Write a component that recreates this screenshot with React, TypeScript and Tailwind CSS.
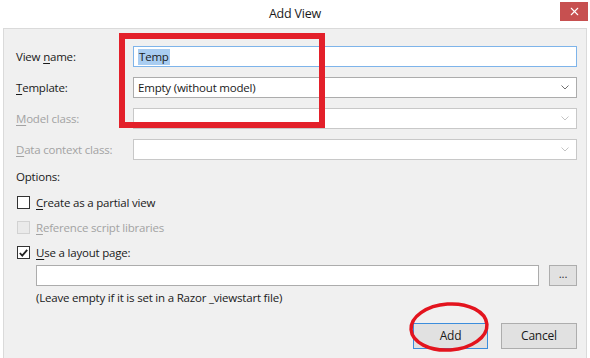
import { X } from "lucide-react";

const Chevron = ({ disabled }: { disabled?: boolean }) => (
  <svg width="8" height="5" viewBox="0 0 8 5" className="mr-[7px]">
    <path
      d="M0.5 0.5 L4 4 L7.5 0.5"
      fill="none"
      stroke={disabled ? "#c4c4c4" : "#707070"}
      strokeWidth="1"
    />
  </svg>
);

const Label = ({
  lead,
  rest,
  pre = "",
  disabled,
}: {
  lead: string;
  rest: string;
  pre?: string;
  disabled?: boolean;
}) => (
  <span className={disabled ? "text-[#a3a3a3]" : "text-[#1a1a1a]"}>
    {pre}
    <span className="underline underline-offset-2">{lead}</span>
    {rest}
  </span>
);

const CheckRow = ({
  lead,
  rest,
  checked,
  disabled,
}: {
  lead: string;
  rest: string;
  checked?: boolean;
  disabled?: boolean;
}) => (
  <div className="flex h-[25px] items-center pl-[13px]">
    <div
      className={
        "flex h-[13px] w-[13px] items-center justify-center border " +
        (disabled ? "border-[#d2d2d2] bg-[#eaeaea]" : "border-[#333] bg-white")
      }
    >
      {checked && (
        <svg width="9" height="8" viewBox="0 0 9 8">
          <path
            d="M0.8 4 L3.3 6.6 L8.2 0.8"
            fill="none"
            stroke="#222"
            strokeWidth="1.8"
          />
        </svg>
      )}
    </div>
    <span className="ml-[6px]">
      <Label lead={lead} rest={rest} disabled={disabled} />
    </span>
  </div>
);

const App = () => {
  return (
    <div
      className="relative flex h-[358px] w-[590px] flex-col overflow-hidden bg-white text-[11.5px] leading-[16px] tracking-[-0.2px]"
      style={{ fontFamily: '"Open Sans", "Noto Sans", sans-serif' }}
    >
      {/* title bar */}
      <div className="relative flex h-[28px] items-center justify-center">
        <span className="text-[12.5px] text-[#1a1a1a]">Add View</span>
        <div className="absolute right-[2px] top-[2px] flex h-[19px] w-[28px] items-center justify-center bg-[#c75050]">
          <X size={13} color="white" strokeWidth={2} />
        </div>
      </div>

      {/* dialog body */}
      <div className="mx-[3px] flex flex-1 flex-col border border-b-0 border-[#dadada] bg-[#f0f0f0] pr-[9px] pt-[17px]">
        <div className="grid grid-cols-[117px_1fr] gap-y-[10px] pl-[12px]">
          <div className="flex h-[21px] items-center">
            <Label pre="View " lead="n" rest="ame:" />
          </div>
          <div className="flex h-[21px] items-center border border-[#7eb4ea] bg-white pl-[4px]">
            <span className="bg-[#a9cdf1] px-[1px] text-[#1a1a1a]">Temp</span>
          </div>

          <div className="flex h-[21px] items-center">
            <Label lead="T" rest="emplate:" />
          </div>
          <div className="flex h-[21px] items-center justify-between border border-[#acacac] bg-white pl-[4px]">
            <span className="text-[#1a1a1a]">Empty (without model)</span>
            <Chevron />
          </div>

          <div className="flex h-[21px] items-center">
            <Label lead="M" rest="odel class:" disabled />
          </div>
          <div className="flex h-[21px] items-center justify-end border border-[#c8c8c8] bg-white">
            <Chevron disabled />
          </div>

          <div className="flex h-[21px] items-center">
            <Label lead="D" rest="ata context class:" disabled />
          </div>
          <div className="flex h-[21px] items-center justify-end border border-[#c8c8c8] bg-white">
            <Chevron disabled />
          </div>
        </div>

        <div className="mt-[9px] h-[16px] pl-[12px] text-[#1a1a1a]">Options:</div>
        <div className="mt-[5px] flex flex-col">
          <CheckRow lead="C" rest="reate as a partial view" />
          <CheckRow lead="R" rest="eference script libraries" disabled />
          <CheckRow lead="U" rest="se a layout page:" checked />
        </div>

        <div className="flex items-center pl-[32px]">
          <div className="h-[21px] flex-1 border border-[#acacac] bg-white" />
          <div className="ml-[10px] flex h-[21px] w-[28px] items-center justify-center border border-[#adadad] bg-[#e1e1e1] pb-[4px] text-[#333]">
            ...
          </div>
        </div>
        <div className="mt-[4px] h-[16px] pl-[32px] text-[#1a1a1a]">
          (Leave empty if it is set in a Razor _viewstart file)
        </div>

        <div className="mt-[17px] flex justify-end gap-[13px]">
          <button className="h-[26px] w-[75px] border border-[#3c8ddc] bg-[#e1e1e1] text-[12px] text-[#1a1a1a]">
            Add
          </button>
          <button className="h-[26px] w-[76px] border border-[#adadad] bg-[#e1e1e1] text-[12px] text-[#1a1a1a]">
            Cancel
          </button>
        </div>
      </div>

      {/* red annotations */}
      <div className="pointer-events-none absolute left-[119px] top-[33px] h-[95px] w-[206px] border-[6px] border-[#e3202a]" />
      <svg
        className="pointer-events-none absolute left-[406px] top-[300px]"
        width="86"
        height="54"
        viewBox="0 0 86 54"
      >
        <ellipse
          cx="43"
          cy="27"
          rx="38"
          ry="23"
          fill="none"
          stroke="#e3141e"
          strokeWidth="3.5"
          transform="rotate(-4 43 27)"
        />
      </svg>
    </div>
  );
};

export default App;
